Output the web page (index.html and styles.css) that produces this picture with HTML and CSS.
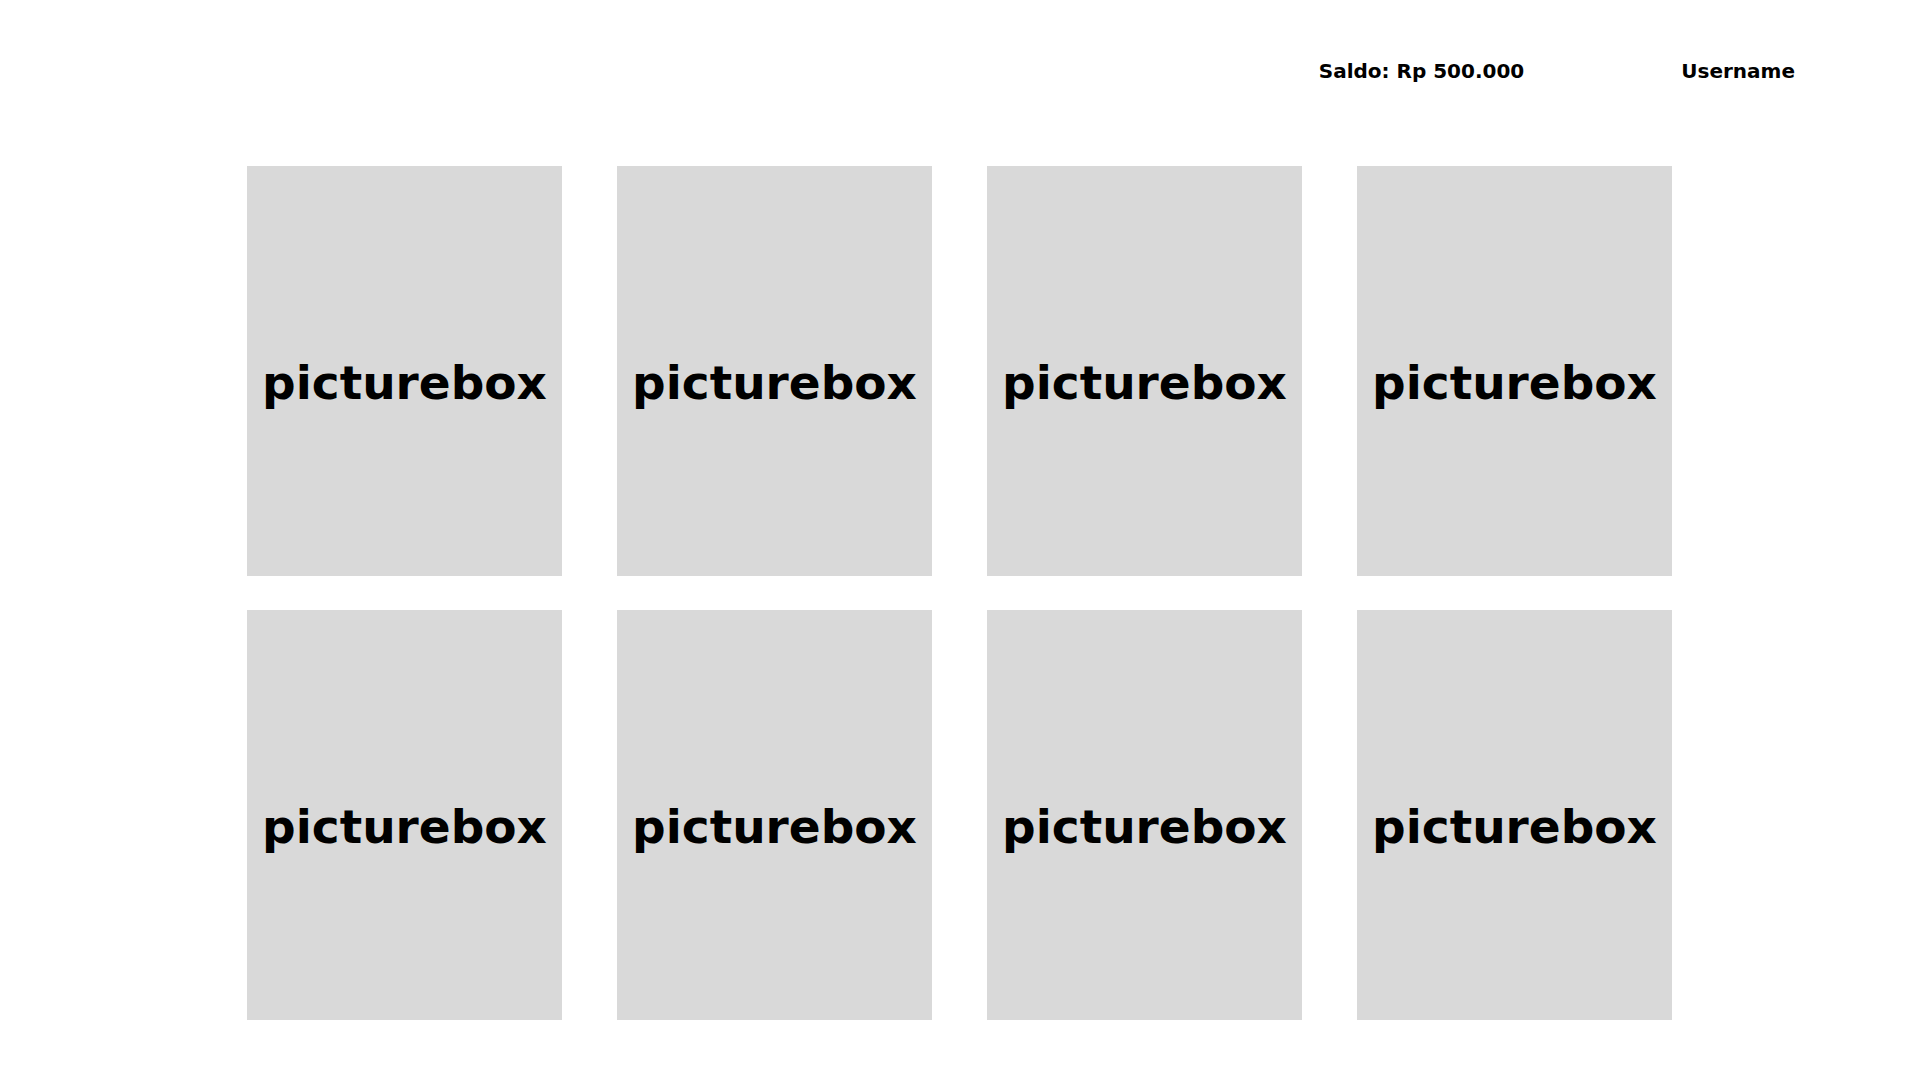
FILE: index.html
```html
<!DOCTYPE html>
<html>
<head>
<meta charset="utf-8">
<link rel="stylesheet" href="styles.css">
</head>
<body>
<header class="topbar">
  <span class="saldo">Saldo: Rp 500.000</span>
  <span class="user">Username</span>
</header>
<main class="grid">
  <div class="pic">picturebox</div>
  <div class="pic">picturebox</div>
  <div class="pic">picturebox</div>
  <div class="pic">picturebox</div>
  <div class="pic">picturebox</div>
  <div class="pic">picturebox</div>
  <div class="pic">picturebox</div>
  <div class="pic">picturebox</div>
</main>
</body>
</html>
```
FILE: styles.css
```css
html, body {
  margin: 0;
  padding: 0;
  background: #ffffff;
}
body {
  font-family: "DejaVu Sans", Verdana, sans-serif;
  font-weight: bold;
  color: #000;
  width: 1920px;
  height: 1080px;
  overflow: hidden;
}
.topbar {
  display: flex;
  justify-content: flex-end;
  align-items: flex-start;
  gap: 157px;
  padding: 61px 125px 0 0;
  font-size: 20px;
  line-height: 20px;
}
.grid {
  display: grid;
  grid-template-columns: repeat(4, 315px);
  grid-auto-rows: 410px;
  column-gap: 55px;
  row-gap: 34px;
  justify-content: start;
  padding-left: 247px;
  margin-top: 85px;
}
.pic {
  background: #d9d9d9;
  display: flex;
  align-items: center;
  justify-content: center;
  font-size: 47px;
  line-height: 1;
  padding-top: 22px;
  box-sizing: border-box;
}
```
